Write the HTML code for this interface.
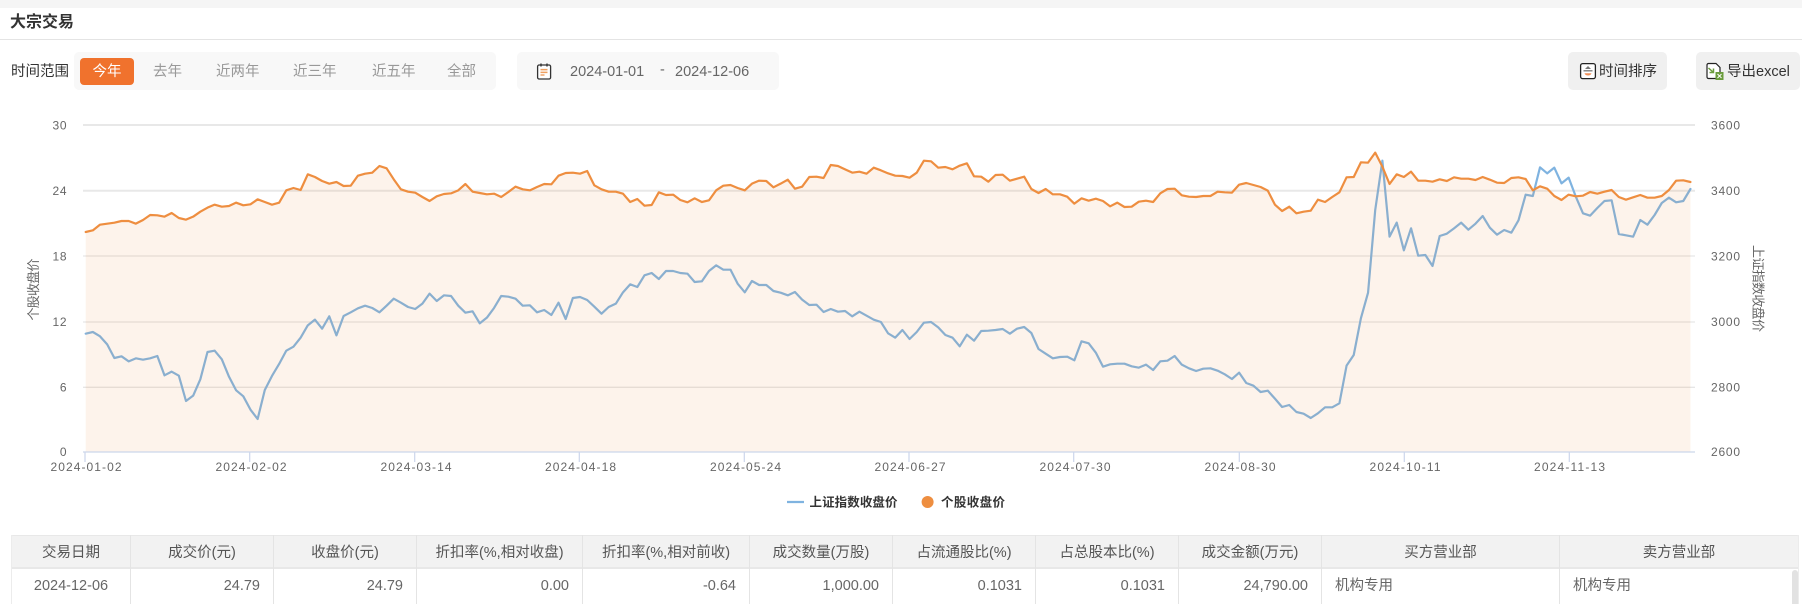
<!DOCTYPE html>
<html lang="zh"><head><meta charset="utf-8"><title>大宗交易</title>
<style>
html,body{margin:0;padding:0;background:#fff}
body{position:relative;width:1802px;height:604px;overflow:hidden;font-family:"Liberation Sans","WenQuanYi Zen Hei","Noto Sans CJK SC",sans-serif;font-size:14.5px;color:#333}
.a{position:absolute;white-space:nowrap}
.t{position:absolute;white-space:nowrap;line-height:20px;height:20px;text-align:center}
.g{color:#999}
.box{position:absolute;border-radius:5px}
.c{position:absolute;top:535px;height:69px;border-right:1px solid #e4e4e4;box-sizing:border-box}
.th{position:absolute;left:0;right:0;top:8px;line-height:20px;text-align:center;color:#555;white-space:nowrap}
.td{position:absolute;left:0;right:0;top:41px;line-height:20px;color:#666;white-space:nowrap}
.r{text-align:right;padding-right:13px}.l{text-align:left;padding-left:13px}.m{text-align:center}
svg text{font-family:"Liberation Sans","WenQuanYi Zen Hei","Noto Sans CJK SC",sans-serif;font-size:12px;fill:#666}
.ln{fill:none;stroke-linejoin:round;stroke-linecap:round;vector-effect:non-scaling-stroke}
</style></head><body>
<div class="a" style="left:0;top:0;width:1802px;height:8px;background:#f5f5f5"></div>
<div class="t" style="left:10px;top:13px;font-size:16px;font-weight:bold;color:#333;text-align:left">大宗交易</div>
<div class="a" style="left:0;top:39px;width:1802px;height:1px;background:#e4e4e4"></div>

<div class="t" style="left:11px;top:62px;color:#333">时间范围</div>
<div class="box" style="left:74px;top:52px;width:422px;height:38px;background:#f8f8f8"></div>
<div class="box" style="left:80px;top:58px;width:54px;height:27px;background:#f0722d;border-radius:4px"></div>
<div class="t" style="left:80px;top:62px;width:54px;color:#fff">今年</div>
<div class="t g" style="left:153px;top:62px">去年</div>
<div class="t g" style="left:216px;top:62px">近两年</div>
<div class="t g" style="left:293px;top:62px">近三年</div>
<div class="t g" style="left:372px;top:62px">近五年</div>
<div class="t g" style="left:447px;top:62px">全部</div>

<div class="box" style="left:517px;top:52px;width:262px;height:38px;background:#f8f8f8"></div>
<svg class="a" style="left:535px;top:62px" width="18" height="18" viewBox="0 0 18 18">
<rect x="2.6" y="3" width="13" height="14" rx="1.5" fill="#fff" stroke="#333" stroke-width="1.3"/>
<path d="M6 1.5v3M12 1.5v3" stroke="#333" stroke-width="1.4"/>
<path d="M5.5 7.6h7M5.500 10.400h7" stroke="#f0a060" stroke-width="1.500"/><path d="M5.500 13h4" stroke="#f0a060" stroke-width="1.400"/></svg>
<div class="t" style="left:570px;top:61.500px;color:#666">2024-01-01</div>
<div class="t" style="left:660px;top:60px;color:#666">-</div>
<div class="t" style="left:675px;top:61.500px;color:#666">2024-12-06</div>

<div class="box" style="left:1568px;top:52px;width:99px;height:38px;background:#f0f0f0"></div>
<svg class="a" style="left:1579px;top:62px" width="18" height="18" viewBox="0 0 18 18">
<rect x="1.600" y="1.600" width="14.800" height="15" rx="2" fill="#fff" stroke="#222" stroke-width="1.300"/>
<path d="M6 7l3-3 3 3z" fill="#777"/><path d="M4.500 8.800h9" stroke="#777" stroke-width="1.300"/>
<path d="M5.500 11.200c.8 3 6.200 3 7 0z" fill="#f0905a"/></svg>
<div class="t" style="left:1599px;top:62px;color:#333">时间排序</div>

<div class="box" style="left:1696px;top:52px;width:104px;height:38px;background:#f0f0f0"></div>
<svg class="a" style="left:1705px;top:62px" width="20" height="18" viewBox="0 0 20 18">
<path d="M2 3a1.500 1.500 0 0 1 1.500-1.500H11l4 4V15a1.500 1.500 0 0 1-1.500 1.500H3.500A1.500 1.500 0 0 1 2 15z" fill="#fff" stroke="#222" stroke-width="1.200"/>
<path d="M3.500 6l5 4.500M8.500 6.500v4h-4" fill="none" stroke="#6a9c3c" stroke-width="1.500"/>
<rect x="10.500" y="10" width="8" height="8" fill="#6a9c3c"/>
<path d="M12.500 12l4 4M16.500 12l-4 4" stroke="#fff" stroke-width="1"/></svg>
<div class="t" style="left:1727px;top:62px;color:#333">导出excel</div>

<svg class="a" style="left:0;top:0" width="1802" height="530" viewBox="0 0 1802 530">
<g fill="none">
<path d="M83 125H1695M83 190.800H1695" stroke="#e8e8e8" stroke-width="2"/>
<path d="M83 256H1695M83 322H1695M83 387.300H1695" stroke="#e6e6e6" stroke-width="1.300"/>
</g>
<g transform="translate(85.700,110) scale(7.164,.33333)">
<polyline class="ln" stroke="#7fb3e0" stroke-width="2.200" points="0,671 1,666 2,679 3,703 4,744 5,739 6,754 7,745 8,749 9,745 10,738 11,796 12,785 13,797 14,873 15,857 16,808 17,726 18,722 19,748 20,800 21,841 22,859 23,899 24,927 25,840 26,798 27,762 28,722 29,710 30,683 31,646 32,629 33,656 34,619 35,676 36,618 37,607 38,595 39,587 40,594 41,607 42,587 43,566 44,578 45,591 46,597 47,581 48,551 49,573 50,556 51,558 52,587 53,608 54,604 55,640 56,623 57,594 58,558 59,560 60,566 61,587 62,586 63,607 64,600 65,615 66,578 67,627 68,564 69,561 70,570 71,590 72,611 73,591 74,581 75,547 76,523 77,531 78,496 79,489 80,507 81,483 82,483 83,489 84,491 85,516 86,514 87,483 88,466 89,479 90,479 91,521 92,547 93,513 94,525 95,525 96,543 97,548 98,556 99,546 100,569 101,585 102,584 103,606 104,597 105,605 106,603 107,619 108,605 109,617 110,629 111,636 112,670 113,683 114,660 115,687 116,666 117,638 118,636 119,652 120,675 121,683 122,709 123,674 124,692 125,663 126,662 127,660 128,657 129,671 130,656 131,651 132,669 133,717 134,731 135,745 136,741 137,740 138,751 139,694 140,700 141,728 142,770 143,763 144,761 145,761 146,769 147,773 148,764 149,780 150,754 151,752 152,738 153,764 154,775 155,783 156,776 157,775 158,782 159,793 160,807 161,788 162,819 163,827 164,846 165,842 166,866 167,891 168,885 169,906 170,911 171,924 172,910 173,892 174,892 175,880 176,767 177,735 178,625 179,548 180,300 181,152 182,380 183,338 184,421 185,355 186,437 187,435 188,468 189,378 190,371 191,355 192,338 193,359 194,341 195,318 196,353 197,374 198,360 199,368 200,331 201,254 202,258 203,172 204,190 205,173 206,220 207,203 208,260 209,310 210,317 211,294 212,273 213,271 214,372 215,376 216,380 217,330 218,344 219,315 220,279 221,263 222,277 223,273 224,237"/>
<polygon fill="#ee8e40" fill-opacity=".105" points="0,1026 0,366 1,361 2,344 3,341 4,338 5,333 6,333 7,341 8,330 9,315 10,316 11,320 12,309 13,324 14,329 15,320 16,305 17,293 18,284 19,290 20,288 21,278 22,286 23,283 24,268 25,276 26,284 27,278 28,241 29,234 30,240 31,193 32,201 33,213 34,221 35,216 36,228 37,227 38,197 39,191 40,188 41,168 42,175 43,208 44,238 45,245 46,248 47,261 48,273 49,259 50,252 51,250 52,241 53,222 54,245 55,249 56,253 57,251 58,261 59,246 60,230 61,238 62,241 63,231 64,222 65,223 66,197 67,189 68,188 69,191 70,183 71,226 72,238 73,245 74,245 75,251 76,276 77,267 78,287 79,285 80,247 81,255 82,254 83,270 84,277 85,265 86,276 87,271 88,241 89,227 90,225 91,234 92,241 93,221 94,212 95,213 96,232 97,221 98,209 99,236 100,230 101,201 102,200 103,204 104,165 105,168 106,178 107,188 108,185 109,191 110,173 111,181 112,190 113,197 114,198 115,203 116,188 117,152 118,154 119,173 120,171 121,178 122,167 123,160 124,199 125,200 126,215 127,195 128,194 129,212 130,206 131,200 132,237 133,249 134,237 135,253 136,253 137,260 138,281 139,265 140,272 141,266 142,273 143,289 144,278 145,291 146,290 147,275 148,272 149,276 150,250 151,237 152,236 153,256 154,260 155,261 156,258 157,258 158,245 159,247 160,248 161,224 162,219 163,225 164,231 165,242 166,284 167,303 168,290 169,310 170,305 171,302 172,269 173,276 174,261 175,247 176,202 177,201 178,157 179,158 180,128 181,170 182,222 183,193 184,201 185,185 186,212 187,212 188,215 189,208 190,213 191,202 192,206 193,206 194,210 195,201 196,209 197,218 198,219 199,204 200,202 201,207 202,241 203,229 204,236 205,258 206,270 207,254 208,259 209,257 210,246 211,251 212,245 213,240 214,261 215,269 216,262 217,255 218,263 219,263 220,258 221,240 222,212 223,211 224,216 224,1026"/>
<polyline class="ln" stroke="#ee8e40" stroke-width="2.200" points="0,366 1,361 2,344 3,341 4,338 5,333 6,333 7,341 8,330 9,315 10,316 11,320 12,309 13,324 14,329 15,320 16,305 17,293 18,284 19,290 20,288 21,278 22,286 23,283 24,268 25,276 26,284 27,278 28,241 29,234 30,240 31,193 32,201 33,213 34,221 35,216 36,228 37,227 38,197 39,191 40,188 41,168 42,175 43,208 44,238 45,245 46,248 47,261 48,273 49,259 50,252 51,250 52,241 53,222 54,245 55,249 56,253 57,251 58,261 59,246 60,230 61,238 62,241 63,231 64,222 65,223 66,197 67,189 68,188 69,191 70,183 71,226 72,238 73,245 74,245 75,251 76,276 77,267 78,287 79,285 80,247 81,255 82,254 83,270 84,277 85,265 86,276 87,271 88,241 89,227 90,225 91,234 92,241 93,221 94,212 95,213 96,232 97,221 98,209 99,236 100,230 101,201 102,200 103,204 104,165 105,168 106,178 107,188 108,185 109,191 110,173 111,181 112,190 113,197 114,198 115,203 116,188 117,152 118,154 119,173 120,171 121,178 122,167 123,160 124,199 125,200 126,215 127,195 128,194 129,212 130,206 131,200 132,237 133,249 134,237 135,253 136,253 137,260 138,281 139,265 140,272 141,266 142,273 143,289 144,278 145,291 146,290 147,275 148,272 149,276 150,250 151,237 152,236 153,256 154,260 155,261 156,258 157,258 158,245 159,247 160,248 161,224 162,219 163,225 164,231 165,242 166,284 167,303 168,290 169,310 170,305 171,302 172,269 173,276 174,261 175,247 176,202 177,201 178,157 179,158 180,128 181,170 182,222 183,193 184,201 185,185 186,212 187,212 188,215 189,208 190,213 191,202 192,206 193,206 194,210 195,201 196,209 197,218 198,219 199,204 200,202 201,207 202,241 203,229 204,236 205,258 206,270 207,254 208,259 209,257 210,246 211,251 212,245 213,240 214,261 215,269 216,262 217,255 218,263 219,263 220,258 221,240 222,212 223,211 224,216"/>
</g>
<path d="M83 452H1695" stroke="#ccd6eb" stroke-width="1.300" fill="none"/>
<path d="M85 452v10M249.700 452v10M414.700 452v10M579.300 452v10M744.300 452v10M909 452v10M1073.700 452v10M1239.300 452v10M1404.300 452v10M1569.300 452v10" stroke="#ccd6eb" stroke-width="1.200" fill="none"/>
<g text-anchor="end">
<text x="66.500" y="129.500" textLength="14">30</text><text x="66.500" y="195" textLength="14">24</text><text x="66.500" y="260.300" textLength="14">18</text><text x="66.500" y="326" textLength="14">12</text><text x="66.500" y="391.300">6</text><text x="66.500" y="456">0</text>
</g>
<g>
<text x="1711" y="129.500" textLength="29">3600</text><text x="1711" y="195" textLength="29">3400</text><text x="1711" y="260.300" textLength="29">3200</text><text x="1711" y="326" textLength="29">3000</text><text x="1711" y="391.300" textLength="29">2800</text><text x="1711" y="456" textLength="29">2600</text>
</g>
<g>
<text x="50.500" y="471" textLength="71">2024-01-02</text><text x="215.500" y="471" textLength="71">2024-02-02</text><text x="380.500" y="471" textLength="71">2024-03-14</text><text x="545" y="471" textLength="71">2024-04-18</text><text x="710" y="471" textLength="71">2024-05-24</text><text x="874.500" y="471" textLength="71">2024-06-27</text><text x="1039.500" y="471" textLength="71">2024-07-30</text><text x="1204.500" y="471" textLength="71">2024-08-30</text><text x="1369.500" y="471" textLength="71">2024-10-11</text><text x="1534" y="471" textLength="71">2024-11-13</text>
</g>
<text transform="translate(38,320.500) rotate(-90)" textLength="62" style="font-size:13px">个股收盘价</text>
<text transform="translate(1753.500,245) rotate(90)" textLength="87" style="font-size:13px">上证指数收盘价</text>
<path d="M787 502H804" stroke="#7fb3e0" stroke-width="2.200" fill="none"/>
<circle cx="927.600" cy="502" r="6" fill="#ee8e40"/>
<text x="809.500" y="506.500" textLength="88" style="font-weight:bold;fill:#333;font-size:12.500px">上证指数收盘价</text>
<text x="941" y="506.500" textLength="64" style="font-weight:bold;fill:#333;font-size:12.500px">个股收盘价</text>
</svg>

<div class="a" style="left:11px;top:535px;width:1788px;height:34px;background:#f2f2f2;border-top:1px solid #e8e8e8;border-bottom:2px solid #e8e8e8;box-sizing:border-box;border-radius:2px 2px 0 0"></div>
<div class="a" style="left:11px;top:535px;width:1px;height:69px;background:#ececec"></div>
<div class="a" style="left:1798px;top:535px;width:1px;height:69px;background:#ececec"></div>
<div class="c" style="left:12px;width:119px"><div class="th">交易日期</div><div class="td m">2024-12-06</div></div>
<div class="c" style="left:131px;width:143px"><div class="th">成交价(元)</div><div class="td r">24.79</div></div>
<div class="c" style="left:274px;width:143px"><div class="th">收盘价(元)</div><div class="td r">24.79</div></div>
<div class="c" style="left:417px;width:166px"><div class="th">折扣率(%,相对收盘)</div><div class="td r">0.00</div></div>
<div class="c" style="left:583px;width:167px"><div class="th">折扣率(%,相对前收)</div><div class="td r">-0.64</div></div>
<div class="c" style="left:750px;width:143px"><div class="th">成交数量(万股)</div><div class="td r">1,000.00</div></div>
<div class="c" style="left:893px;width:143px"><div class="th">占流通股比(%)</div><div class="td r">0.1031</div></div>
<div class="c" style="left:1036px;width:143px"><div class="th">占总股本比(%)</div><div class="td r">0.1031</div></div>
<div class="c" style="left:1179px;width:143px"><div class="th">成交金额(万元)</div><div class="td r">24,790.00</div></div>
<div class="c" style="left:1322px;width:238px"><div class="th">买方营业部</div><div class="td l">机构专用</div></div>
<div class="c" style="left:1560px;width:238px;border-right:0"><div class="th">卖方营业部</div><div class="td l">机构专用</div></div>
<div class="a" style="left:1792px;top:570px;width:6px;height:34px;background:#e2e2e2;border-radius:3px 3px 0 0"></div>
</body></html>
